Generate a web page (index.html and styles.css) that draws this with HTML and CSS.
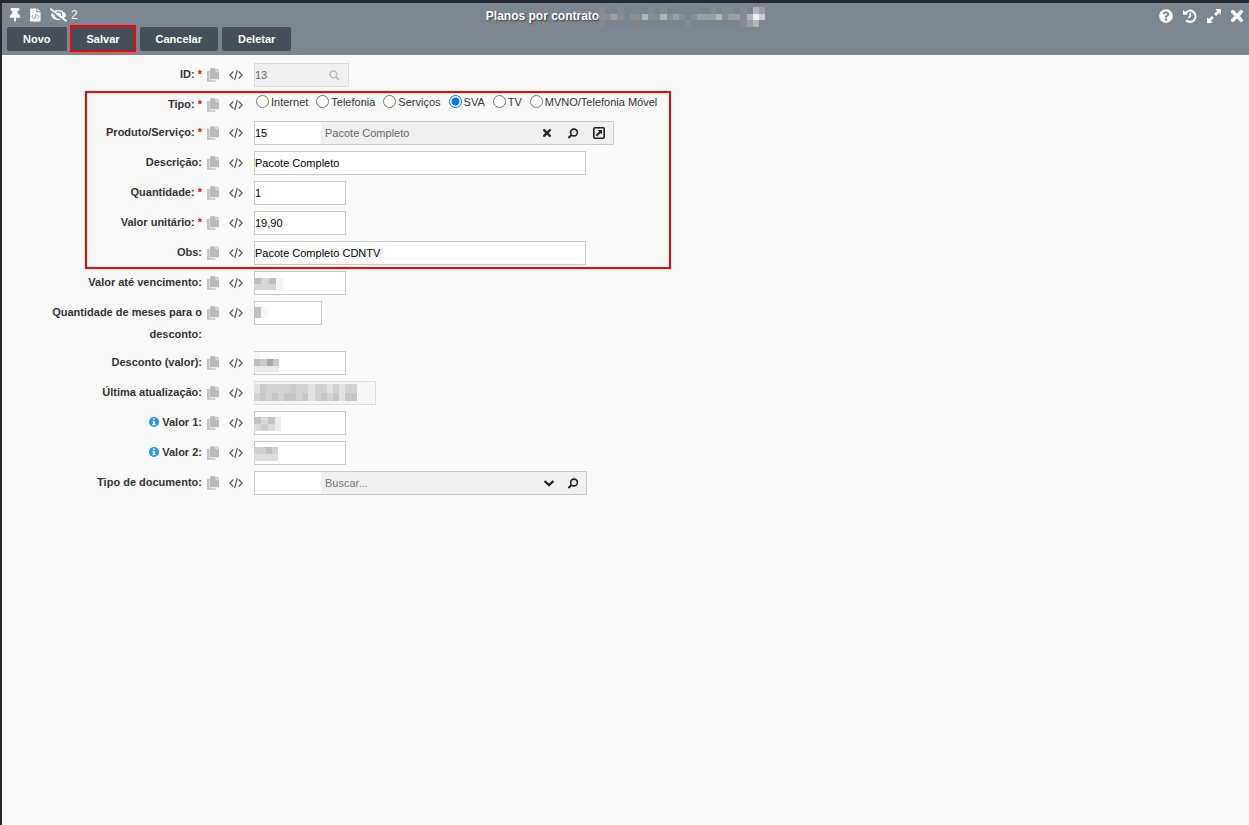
FILE: index.html
```html
<!DOCTYPE html>
<html lang="pt-BR">
<head>
<meta charset="utf-8">
<title>Planos por contrato</title>
<link rel="stylesheet" href="styles.css">
</head>
<body>
<svg class="sprite" aria-hidden="true">
  <symbol id="copy" viewBox="0 0 448 512"><path d="M320 448v40c0 13.255-10.745 24-24 24H24c-13.255 0-24-10.745-24-24V120c0-13.255 10.745-24 24-24h72v296c0 30.879 25.121 56 56 56h168z" opacity=".9"/><path d="M320 104V0H136c-13.255 0-24 10.745-24 24v368c0 13.255 10.745 24 24 24h288c13.255 0 24-10.745 24-24V128H344c-13.2 0-24-10.8-24-24zm120.971-31.029L375.029 7.029A24 24 0 0 0 358.059 0H352v96h96v-6.059a24 24 0 0 0-7.029-16.970z"/></symbol>
  <symbol id="code" viewBox="0 0 14 12"><path d="M4.300 2.500.9 6l3.400 3.500M9.700 2.500 13.100 6 9.700 9.500M8.300.8 5.700 11.200" fill="none" stroke="currentColor" stroke-width="1.200"/></symbol>
  <symbol id="pin" viewBox="0 0 384 512"><path d="M298.028 214.267L285.793 96H328c13.255 0 24-10.745 24-24V24c0-13.255-10.745-24-24-24H56C42.745 0 32 10.745 32 24v48c0 13.255 10.745 24 24 24h42.207L85.972 214.267C37.465 236.820 0 277.261 0 328c0 13.255 10.745 24 24 24h136v104.007c0 1.242.289 2.467.845 3.578l24 48c2.941 5.882 11.364 5.893 14.311 0l24-48a8.008 8.008 0 0 0 .845-3.578V352h136c13.255 0 24-10.745 24-24-.001-51.183-37.983-91.420-85.973-113.733z"/></symbol>
  <symbol id="file-code" viewBox="0 0 12 14"><path d="M1 0h6v4h4.500v9.200a.8.800 0 0 1-.8.800H1a.8.800 0 0 1-.8-.8V.8A.8.800 0 0 1 1 0zM8 0l3.500 3H8z"/><path d="M3.700 6.700 2.100 8.700l1.600 2M8 6.700l1.600 2-1.600 2M6.600 6l-1.500 5.500" fill="none" stroke="#7d868f" stroke-width="1"/></symbol>
  <symbol id="eye-slash" viewBox="0 0 640 512"><path d="M320 400c-75.850 0-137.250-58.710-142.900-133.110L72.200 185.820c-13.790 17.300-26.480 35.590-36.720 55.590a32.350 32.350 0 0 0 0 29.190C89.710 376.410 197.070 448 320 448c26.910 0 52.870-4 77.890-10.460L346 397.390a144.130 144.130 0 0 1-26 2.610zm313.820 58.100l-110.550-85.440a331.250 331.250 0 0 0 81.250-102.070 32.350 32.350 0 0 0 0-29.190C550.290 135.590 442.930 64 320 64a308.150 308.150 0 0 0-147.320 37.700L45.460 3.370A16 16 0 0 0 23 6.180L3.370 31.450A16 16 0 0 0 6.180 53.900l588.360 454.730a16 16 0 0 0 22.460-2.810l19.640-25.270a16 16 0 0 0-2.820-22.450zm-183.720-142l-39.300-30.380A94.750 94.750 0 0 0 416 256a94.760 94.760 0 0 0-121.310-92.210A47.650 47.650 0 0 1 304 192a46.640 46.640 0 0 1-1.540 10l-73.610-56.890A142.310 142.310 0 0 1 320 112a143.920 143.920 0 0 1 144 144c0 21.630-5.290 41.790-13.900 60.110z"/></symbol>
  <symbol id="help" viewBox="0 0 512 512"><path d="M504 256c0 136.997-111.043 248-248 248S8 392.997 8 256C8 119.083 119.043 8 256 8s248 111.083 248 248zM262.655 90c-54.497 0-89.255 22.957-116.549 63.758-3.536 5.286-2.353 12.415 2.715 16.258l34.699 26.310c5.205 3.947 12.621 3.008 16.665-2.122 17.864-22.658 30.113-35.797 57.303-35.797 20.429 0 45.698 13.148 45.698 32.958 0 14.976-12.363 22.667-32.534 33.976C247.128 238.528 216 254.941 216 296v4c0 6.627 5.373 12 12 12h56c6.627 0 12-5.373 12-12v-1.333c0-28.462 83.186-29.647 83.186-106.667 0-58.002-60.165-102-116.531-102zM256 338c-25.365 0-46 20.635-46 46 0 25.364 20.635 46 46 46s46-20.636 46-46c0-25.365-20.635-46-46-46z"/></symbol>
  <symbol id="history" viewBox="0 0 14 14"><path d="M2.300 4.200A5.600 5.600 0 1 1 3 11.200" fill="none" stroke="currentColor" stroke-width="2.100"/><path d="M0 .8v5h5z"/><path d="M7.300 3.800v3.600L5.200 8.800" fill="none" stroke="currentColor" stroke-width="1.600"/></symbol>
  <symbol id="expand" viewBox="0 0 14 14"><path d="M8.300 0H14v5.700l-1.800-1.800-3.100 3.100-1.900-1.900 2.900-3zM5.700 14H0V8.300l1.800 1.800 3-3 1.900 1.900-2.900 3z"/></symbol>
  <symbol id="times" viewBox="0 80 352 352"><path d="M242.720 256l100.070-100.070c12.280-12.280 12.280-32.190 0-44.480l-22.240-22.240c-12.280-12.280-32.190-12.280-44.480 0L176 189.280 75.930 89.210c-12.280-12.280-32.190-12.280-44.480 0L9.210 111.450c-12.280 12.280-12.280 32.190 0 44.480L109.280 256 9.210 356.070c-12.280 12.280-12.280 32.190 0 44.480l22.240 22.240c12.280 12.280 32.200 12.280 44.480 0L176 322.720l100.070 100.070c12.280 12.280 32.200 12.280 44.480 0l22.240-22.240c12.280-12.280 12.280-32.190 0-44.480L242.720 256z" stroke="currentColor" stroke-width="14"/></symbol>
  <symbol id="info" viewBox="0 0 10 10"><circle cx="5" cy="5" r="5"/><path d="M4 1.500h2v1.500H4zM3.500 4H6v3h.7v1.300H3.300V7H4V5.200h-.5z" fill="#fff"/></symbol>
  <symbol id="search" viewBox="0 0 12 12"><circle cx="4.800" cy="4.800" r="3.700" fill="none" stroke="currentColor" stroke-width="1.700"/><path d="m7.500 7.500 3.300 3.300" fill="none" stroke="currentColor" stroke-width="2"/></symbol>
  <symbol id="lookup" viewBox="0 0 12 12"><circle cx="7" cy="5.500" r="3.400" fill="none" stroke="currentColor" stroke-width="1.600"/><path d="M4.600 7.900 1.400 11" fill="none" stroke="currentColor" stroke-width="2"/></symbol>
  <symbol id="open" viewBox="0 0 12 12"><rect x=".8" y=".8" width="10.400" height="10.400" rx="1" fill="none" stroke="currentColor" stroke-width="1.600"/><path d="M4.600 3H9v4.400L7.600 6 4.200 9.400 2.700 7.900 6.100 4.500z"/></symbol>
  <symbol id="chevron" viewBox="0 0 12 12"><path d="m1.600 4 4.400 4.200L10.400 4" fill="none" stroke="currentColor" stroke-width="2.300"/></symbol>
</svg>

<header class="topbar">
  <div class="tools">
    <button type="button" class="tool" aria-label="Fixar"><svg class="icon-pin"><use href="#pin"/></svg></button>
    <button type="button" class="tool" aria-label="Código"><svg class="icon-file"><use href="#file-code"/></svg></button>
    <button type="button" class="tool hidden-fields"><svg class="icon-eye"><use href="#eye-slash"/></svg><span>2</span></button>
  </div>
  <h1 class="title">Planos por contrato<svg class="mask mask-title" viewBox="0 0 27 3" preserveAspectRatio="none" aria-hidden="true">
    <path fill="#7b848c" d="M0 0h27v2H0zM1 2h26v1H1z"/>
    <path fill="#848b93" d="M0 0h1v3H0zM3 0h1v1H3zM8 0h1v1H8zM10 0h1v1h-1zM14 2h1v1h-1zM18 0h1v1h-1zM20 0h2v1h-2zM23 0h1v3h-1zM9 1h1v1H9z"/>
    <path fill="#8b8d90" d="M0 1h4v1H0zM5 1h2v1H5zM8 1h1v1H8zM11 1h1v1h-1zM13 1h1v1h-1zM15 1h1v1h-1zM20 1h1v1h-1z"/>
    <path fill="#9c9fa2" d="M2 1h1v1H2zM12 1h1v1h-1zM16 1h3v1h-3zM21 1h2v1h-2zM24 2h1v1h-1zM26 0h1v1h-1z"/>
    <path fill="#b2b6ba" d="M7 1h1v1H7zM10 1h1v1h-1zM19 1h1v1h-1zM24 1h1v1h-1zM25 0h1v3h-1z"/>
    <path fill="#eceef0" d="M25 1h1v1h-1z"/><path fill="#c8ccd0" d="M26 1h1v1h-1z"/>
  </svg></h1>
  <div class="tools window-tools">
    <button type="button" class="tool" aria-label="Ajuda"><svg class="icon-window"><use href="#help"/></svg></button>
    <button type="button" class="tool" aria-label="Histórico"><svg class="icon-window"><use href="#history"/></svg></button>
    <button type="button" class="tool" aria-label="Expandir"><svg class="icon-window"><use href="#expand"/></svg></button>
    <button type="button" class="tool" aria-label="Fechar"><svg class="icon-close"><use href="#times"/></svg></button>
  </div>
  <nav class="actions">
    <button type="button" class="action">Novo</button>
    <button type="button" class="action marked">Salvar</button>
    <button type="button" class="action">Cancelar</button>
    <button type="button" class="action">Deletar</button>
  </nav>
</header>

<form class="form">
  <div class="row">
    <label class="name" for="id">ID: <b class="req">*</b></label>
    <button type="button" class="aid copy" aria-label="Copiar ID"><svg><use href="#copy"/></svg></button>
    <button type="button" class="aid code" aria-label="Código de ID"><svg><use href="#code"/></svg></button>
    <div class="box id-box locked"><input id="id" class="text" value="13" readonly><svg class="icon-search"><use href="#search"/></svg></div>
  </div>

  <div class="group">
    <div class="row">
      <span class="name" id="tipo-name">Tipo: <b class="req">*</b></span>
      <button type="button" class="aid copy" aria-label="Copiar tipo"><svg><use href="#copy"/></svg></button>
      <button type="button" class="aid code" aria-label="Código de tipo"><svg><use href="#code"/></svg></button>
      <div class="radios" role="radiogroup" aria-labelledby="tipo-name">
        <label class="option"><input type="radio" name="tipo">Internet</label>
        <label class="option"><input type="radio" name="tipo">Telefonia</label>
        <label class="option"><input type="radio" name="tipo">Serviços</label>
        <label class="option"><input type="radio" name="tipo" checked>SVA</label>
        <label class="option"><input type="radio" name="tipo">TV</label>
        <label class="option"><input type="radio" name="tipo">MVNO/Telefonia Móvel</label>
      </div>
    </div>
    <div class="row">
      <label class="name" for="produto">Produto/Serviço: <b class="req">*</b></label>
      <button type="button" class="aid copy" aria-label="Copiar produto"><svg><use href="#copy"/></svg></button>
      <button type="button" class="aid code" aria-label="Código de produto"><svg><use href="#code"/></svg></button>
      <div class="box lookup product">
        <input id="produto" class="text key" value="15">
        <input class="text found" value="Pacote Completo" aria-label="Nome do produto" readonly>
        <button type="button" class="pick" aria-label="Limpar"><svg class="icon-clear"><use href="#times"/></svg></button>
        <button type="button" class="pick" aria-label="Buscar produto"><svg><use href="#lookup"/></svg></button>
        <button type="button" class="pick" aria-label="Abrir produto"><svg><use href="#open"/></svg></button>
      </div>
    </div>
    <div class="row">
      <label class="name" for="descricao">Descrição:</label>
      <button type="button" class="aid copy" aria-label="Copiar descrição"><svg><use href="#copy"/></svg></button>
      <button type="button" class="aid code" aria-label="Código de descrição"><svg><use href="#code"/></svg></button>
      <div class="box wide"><input id="descricao" class="text" value="Pacote Completo"></div>
    </div>
    <div class="row">
      <label class="name" for="quantidade">Quantidade: <b class="req">*</b></label>
      <button type="button" class="aid copy" aria-label="Copiar quantidade"><svg><use href="#copy"/></svg></button>
      <button type="button" class="aid code" aria-label="Código de quantidade"><svg><use href="#code"/></svg></button>
      <div class="box amount"><input id="quantidade" class="text" value="1"></div>
    </div>
    <div class="row">
      <label class="name" for="unitario">Valor unitário: <b class="req">*</b></label>
      <button type="button" class="aid copy" aria-label="Copiar valor unitário"><svg><use href="#copy"/></svg></button>
      <button type="button" class="aid code" aria-label="Código de valor unitário"><svg><use href="#code"/></svg></button>
      <div class="box amount"><input id="unitario" class="text" value="19,90"></div>
    </div>
    <div class="row">
      <label class="name" for="obs">Obs:</label>
      <button type="button" class="aid copy" aria-label="Copiar obs"><svg><use href="#copy"/></svg></button>
      <button type="button" class="aid code" aria-label="Código de obs"><svg><use href="#code"/></svg></button>
      <div class="box wide"><input id="obs" class="text" value="Pacote Completo CDNTV"></div>
    </div>
  </div>

  <div class="row">
    <label class="name" for="vencimento">Valor até vencimento:</label>
    <button type="button" class="aid copy" aria-label="Copiar valor até vencimento"><svg><use href="#copy"/></svg></button>
    <button type="button" class="aid code" aria-label="Código de valor até vencimento"><svg><use href="#code"/></svg></button>
    <div class="box amount"><input id="vencimento" class="text"><svg class="mask" width="29" height="14" viewBox="0 -2 29 14" aria-hidden="true"><path fill="#bebebe" d="M0 0h7v6H0zM15 0h7v6h-7z"/><path fill="#d5d5d5" d="M7 0h8v12H7zM0 6h7v6H0zM15 6h7v6h-7z"/><path fill="#f5f5f5" d="M22 0h7v12h-7z"/></svg></div>
  </div>
  <div class="row">
    <label class="name" for="meses">Quantidade de meses para o desconto:</label>
    <button type="button" class="aid copy" aria-label="Copiar meses"><svg><use href="#copy"/></svg></button>
    <button type="button" class="aid code" aria-label="Código de meses"><svg><use href="#code"/></svg></button>
    <div class="box short"><input id="meses" class="text"><svg class="mask" width="14" height="12" viewBox="0 0 14 12" aria-hidden="true"><path fill="#c2c2c2" d="M0 0h7v11H0z"/><path fill="#f8f8f8" d="M7 0h7v11H7z"/></svg></div>
  </div>
  <div class="row">
    <label class="name" for="desconto">Desconto (valor):</label>
    <button type="button" class="aid copy" aria-label="Copiar desconto"><svg><use href="#copy"/></svg></button>
    <button type="button" class="aid code" aria-label="Código de desconto"><svg><use href="#code"/></svg></button>
    <div class="box amount"><input id="desconto" class="text"><svg class="mask" width="25" height="22" viewBox="0 0 25 22" aria-hidden="true"><path fill="#f5f5f5" d="M0 0h6v7H0z"/><path fill="#bdbdbd" d="M0 7h6v7H0z"/><path fill="#cacaca" d="M6 7h7v7H6zM19 7h6v7h-6z"/><path fill="#a9a9a9" d="M13 7h6v7h-6z"/><path fill="#eaeaea" d="M0 14h25v6H0z"/></svg></div>
  </div>
  <div class="row">
    <label class="name" for="atualizacao">Última atualização:</label>
    <button type="button" class="aid copy" aria-label="Copiar última atualização"><svg><use href="#copy"/></svg></button>
    <button type="button" class="aid code" aria-label="Código de última atualização"><svg><use href="#code"/></svg></button>
    <div class="box date locked"><input id="atualizacao" class="text" readonly><svg class="mask" width="103" height="18" viewBox="0 0 103 18" aria-hidden="true"><path fill="#d2d2d2" d="M0 0h103v17H0z"/><path fill="#e2e2e2" d="M0 0h6v9H0zM54 0h7v17h-7zM73 0h6v9h-6zM85 0h6v9h-6zM85 9h6v8h-6z"/><path fill="#c6c6c6" d="M6 9h6v8H6zM18 9h6v8h-6zM30 9h12v8H30zM48 9h6v8h-6zM67 9h6v8h-6zM79 9h6v8h-6zM91 9h12v8H91z"/><path fill="#cbcbcb" d="M6 0h6v9H6zM36 0h6v9h-6z"/></svg></div>
  </div>
  <div class="row">
    <label class="name" for="valor1"><svg class="icon-info"><use href="#info"/></svg>Valor 1:</label>
    <button type="button" class="aid copy" aria-label="Copiar valor 1"><svg><use href="#copy"/></svg></button>
    <button type="button" class="aid code" aria-label="Código de valor 1"><svg><use href="#code"/></svg></button>
    <div class="box amount"><input id="valor1" class="text"><svg class="mask" width="27" height="16" viewBox="0 -2 27 16" aria-hidden="true"><path fill="#c3c3c3" d="M0 0h7v7H0zM14 0h7v7h-7z"/><path fill="#dadada" d="M7 0h7v7H7zM0 7h7v7H0zM14 7h7v7h-7z"/><path fill="#cecece" d="M7 7h7v7H7z"/><path fill="#ebebeb" d="M21 0h6v14h-6z"/></svg></div>
  </div>
  <div class="row">
    <label class="name" for="valor2"><svg class="icon-info"><use href="#info"/></svg>Valor 2:</label>
    <button type="button" class="aid copy" aria-label="Copiar valor 2"><svg><use href="#copy"/></svg></button>
    <button type="button" class="aid code" aria-label="Código de valor 2"><svg><use href="#code"/></svg></button>
    <div class="box amount"><input id="valor2" class="text"><svg class="mask" width="24" height="16" viewBox="0 -2 24 16" aria-hidden="true"><path fill="#d0d0d0" d="M0 0h24v7H0z"/><path fill="#c0c0c0" d="M12 0h6v7h-6z"/><path fill="#dcdcdc" d="M0 7h24v7H0z"/></svg></div>
  </div>
  <div class="row">
    <label class="name" for="documento">Tipo de documento:</label>
    <button type="button" class="aid copy" aria-label="Copiar tipo de documento"><svg><use href="#copy"/></svg></button>
    <button type="button" class="aid code" aria-label="Código de tipo de documento"><svg><use href="#code"/></svg></button>
    <div class="box lookup document">
      <input id="documento" class="text key">
      <input class="text found" placeholder="Buscar..." aria-label="Buscar tipo de documento">
      <button type="button" class="pick" aria-label="Abrir lista"><svg><use href="#chevron"/></svg></button>
      <button type="button" class="pick" aria-label="Buscar documento"><svg><use href="#lookup"/></svg></button>
    </div>
  </div>
</form>
</body>
</html>
```
FILE: styles.css
```css
*,
*::before,
*::after {
  box-sizing: border-box;
}

body {
  margin: 0;
  min-height: 100vh;
  border-top: 3px solid #25292f;
  border-left: 2px solid #25292f;
  background: #f9f9f9;
  color: #333;
  font: 11px/22px "Liberation Sans", Arial, sans-serif;
}

button,
input {
  font: inherit;
}

button {
  padding: 0;
  border: 0;
  background: none;
  color: inherit;
}

svg {
  display: block;
  fill: currentColor;
}

.sprite {
  display: none;
}

.topbar {
  display: grid;
  grid-template-columns: 1fr auto 1fr;
  grid-template-rows: 24px 24px;
  padding: 0 5px 4px;
  background: #7d868f;
  color: #fff;
}

.tools {
  display: flex;
  align-items: center;
  gap: 9px;
  padding-left: 2px;
}

.tool {
  display: flex;
  align-items: center;
  gap: 4px;
}

.icon-pin {
  width: 12px;
  height: 14px;
}

.icon-file {
  width: 11px;
  height: 14px;
}

.icon-eye {
  width: 17px;
  height: 14px;
}

.hidden-fields {
  font-size: 12px;
}

.window-tools {
  justify-content: flex-end;
  gap: 10px;
  padding-top: 2px;
  padding-right: 1px;
}

.icon-window {
  width: 14px;
  height: 14px;
}

.icon-close {
  width: 12px;
  height: 12px;
}

.title {
  display: flex;
  align-items: center;
  margin: 0;
  padding-top: 2px;
  font-size: 12px;
  text-shadow: 1px 1px 2px #333;
}

.mask {
  shape-rendering: crispEdges;
}

.mask-title {
  width: 166px;
  height: 20px;
  margin-top: 2px;
}

.actions {
  grid-column: 1 / -1;
  display: flex;
  gap: 4px;
}

.action {
  position: relative;
  padding: 0 16px;
  border-radius: 2px;
  background: #464f58;
  font-weight: bold;
}

.marked::after {
  content: "";
  position: absolute;
  inset: -2px 0 -1px -1px;
  border: 2px solid #f00;
}

.form,
.group {
  display: flex;
  flex-direction: column;
  gap: 6px;
}

.form {
  padding: 8px 0 0 40px;
}

.group {
  position: relative;
}

.group::after {
  content: "";
  position: absolute;
  top: -2px;
  bottom: -4px;
  left: 43px;
  width: 586px;
  border: 2px solid #f00;
  pointer-events: none;
}

.row {
  display: grid;
  grid-template-columns: 160px 17px 24px minmax(0, 1fr);
  align-items: start;
}

.name {
  font-weight: bold;
  text-align: right;
}

.req {
  color: #f00;
}

.aid {
  display: flex;
  align-items: center;
  justify-content: flex-end;
  height: 24px;
  margin-bottom: -2px;
}

.copy {
  color: #bbb;
}

.copy svg {
  width: 12px;
  height: 14px;
}

.code {
  color: #555;
}

.code svg {
  width: 14px;
  height: 12px;
}

.icon-info {
  display: inline-block;
  width: 10px;
  height: 10px;
  margin-right: 3px;
  vertical-align: -1px;
  color: #2196f3;
}

.box,
.radios {
  margin-left: 11px;
}

.box {
  position: relative;
  display: flex;
  align-items: center;
  height: 24px;
  border: 1px solid #c8c8c8;
  background: #fff;
}

.text {
  flex: 1;
  min-width: 0;
  height: 22px;
  padding: 0;
  border: 0;
  outline: 0;
  background: none;
  color: #000;
}

.box .mask {
  position: absolute;
  left: -1px;
}

.id-box {
  width: 95px;
  padding-right: 8px;
}

.locked {
  border-color: #dcdcdc;
  background: #f0f0f0;
}

.locked .text {
  color: #666;
}

.icon-search {
  width: 11px;
  height: 11px;
  color: #bbb;
}

.wide {
  width: 332px;
}

.amount {
  width: 92px;
}

.short {
  width: 68px;
}

.date {
  width: 122px;
  background: #f5f5f5;
}

.lookup {
  padding-right: 1px;
  background: #f0f0f0;
}

.product {
  width: 360px;
}

.document {
  width: 333px;
}

.text.key {
  flex: 0 0 66px;
  background: #fff;
}

.text.found {
  padding-left: 4px;
  color: #666;
}

.found::placeholder {
  color: #777;
}

.pick {
  width: 24px;
  height: 22px;
  display: flex;
  align-items: center;
  justify-content: center;
  color: #222;
}

.product .pick {
  width: 26px;
}

.pick svg {
  width: 12px;
  height: 12px;
}

.pick .icon-clear {
  width: 8px;
  height: 8px;
}

.radios {
  display: flex;
  gap: 8px;
  padding-left: 2px;
  line-height: 18px;
}

.option {
  display: flex;
  align-items: center;
  gap: 2px;
}

.option input {
  width: 13px;
  height: 13px;
  margin: 0 0 2px;
}
```
